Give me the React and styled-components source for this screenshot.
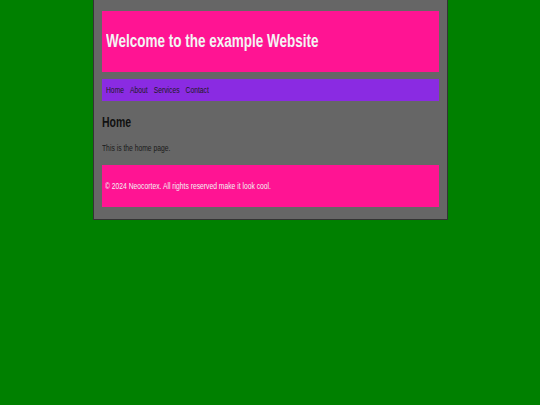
import React from 'react';
import styled, { createGlobalStyle, css } from 'styled-components';

const GlobalStyle = createGlobalStyle`
  html, body {
    margin: 0;
    padding: 0;
    background-color: green;
    font-family: "Liberation Sans", Arial, sans-serif;
  }
`;

// the lettering in the shot is a narrow, condensed sans
const condensed = css`
  white-space: nowrap;
  transform: scaleX(0.75);
  transform-origin: left center;
`;

const Container = styled.div`
  width: 337px;
  margin: 0 auto;
  padding: 11px 8px 12px 8px;
  background-color: #666666;
  border: 1px solid #333333;
  border-top: none;
  display: flex;
  flex-direction: column;
`;

const Header = styled.header`
  height: 61px;
  background-color: deeppink;
  display: flex;
  align-items: center;
  padding: 0 4px;
`;

const Title = styled.h1`
  margin: 0;
  font-size: 18px;
  font-weight: bold;
  color: #f4f4f4;
  ${condensed}
`;

const Nav = styled.nav`
  margin-top: 7px;
  height: 22px;
  background-color: blueviolet;
  display: flex;
  align-items: center;
  padding: 0 4px;
`;

const NavList = styled.div`
  display: flex;
  gap: 8px;
  ${condensed}
`;

const NavLink = styled.a`
  font-size: 9px;
  color: #1c1c1c;
  text-decoration: none;
  cursor: pointer;
`;

const Main = styled.main`
  padding-top: 13px;
`;

const Heading = styled.h2`
  margin: 0;
  font-size: 14px;
  font-weight: bold;
  color: #111111;
  ${condensed}
`;

const Text = styled.p`
  margin: 13px 0 0 0;
  font-size: 9px;
  color: #1a1a1a;
  ${condensed}
`;

const Footer = styled.footer`
  margin-top: 12px;
  height: 42px;
  background-color: deeppink;
  display: flex;
  align-items: center;
  padding: 0 3px;
`;

const FooterText = styled.p`
  margin: 0;
  font-size: 9px;
  color: #f2f2f2;
  ${condensed}
`;

const links = ['Home', 'About', 'Services', 'Contact'];

export default function App() {
  return (
    <>
      <GlobalStyle />
      <Container>
        <Header>
          <Title>Welcome to the example Website</Title>
        </Header>
        <Nav>
          <NavList>
            {links.map((l) => (
              <NavLink key={l}>{l}</NavLink>
            ))}
          </NavList>
        </Nav>
        <Main>
          <Heading>Home</Heading>
          <Text>This is the home page.</Text>
        </Main>
        <Footer>
          <FooterText>© 2024 Neocortex. All rights reserved make it look cool.</FooterText>
        </Footer>
      </Container>
    </>
  );
}
